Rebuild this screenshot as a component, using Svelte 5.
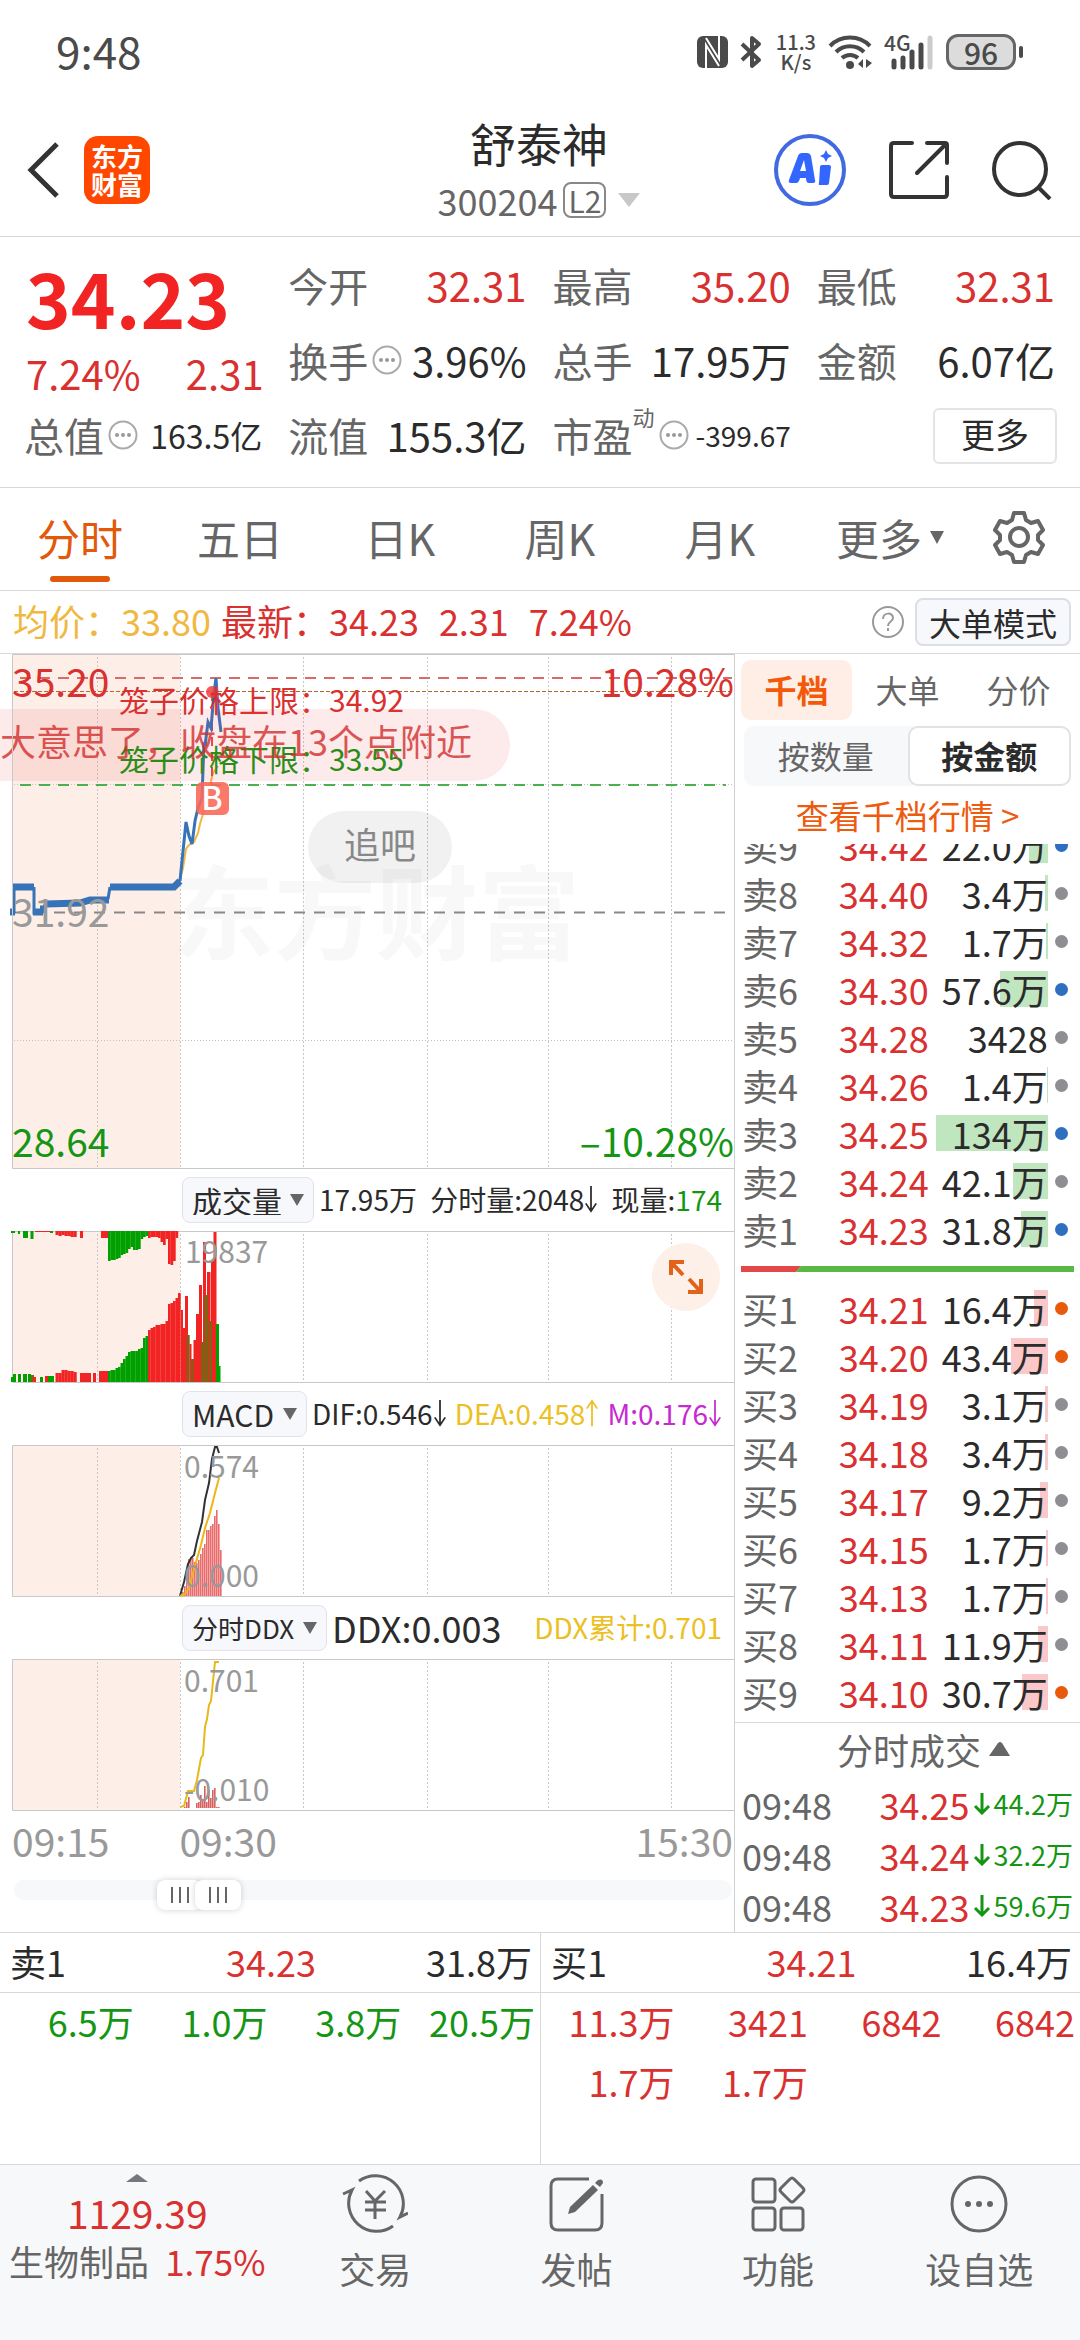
<script lang="ts">
	type Bar = [x: number, w: number, h: number, color: string];

	const RED = '#f22323';
	const GREEN = '#00a000';
	const BROWN = '#7d6414';
	const MAX_AMOUNT = 134;

	const periods = ['分时', '五日', '日K', '周K', '月K'];
	let period = $state('分时');

	const bookTabs = ['千档', '大单', '分价'];
	let bookTab = $state('千档');

	const units = ['按数量', '按金额'];
	let unit = $state('按金额');

	let rangeStart = $state(213);
	let rangeEnd = $state(269);

	const asks = [
		{ name: '卖9', price: '34.42', text: '22.0万', amount: 22, dot: 'blue' },
		{ name: '卖8', price: '34.40', text: '3.4万', amount: 3.4, dot: 'gray' },
		{ name: '卖7', price: '34.32', text: '1.7万', amount: 1.7, dot: 'gray' },
		{ name: '卖6', price: '34.30', text: '57.6万', amount: 57.6, dot: 'blue' },
		{ name: '卖5', price: '34.28', text: '3428', amount: 0, dot: 'gray' },
		{ name: '卖4', price: '34.26', text: '1.4万', amount: 1.4, dot: 'gray' },
		{ name: '卖3', price: '34.25', text: '134万', amount: 134, dot: 'blue' },
		{ name: '卖2', price: '34.24', text: '42.1万', amount: 42.1, dot: 'gray' },
		{ name: '卖1', price: '34.23', text: '31.8万', amount: 31.8, dot: 'blue' }
	];
	const bids = [
		{ name: '买1', price: '34.21', text: '16.4万', amount: 16.4, dot: 'orange' },
		{ name: '买2', price: '34.20', text: '43.4万', amount: 43.4, dot: 'orange' },
		{ name: '买3', price: '34.19', text: '3.1万', amount: 3.1, dot: 'gray' },
		{ name: '买4', price: '34.18', text: '3.4万', amount: 3.4, dot: 'gray' },
		{ name: '买5', price: '34.17', text: '9.2万', amount: 9.2, dot: 'gray' },
		{ name: '买6', price: '34.15', text: '1.7万', amount: 1.7, dot: 'gray' },
		{ name: '买7', price: '34.13', text: '1.7万', amount: 1.7, dot: 'gray' },
		{ name: '买8', price: '34.11', text: '11.9万', amount: 11.9, dot: 'gray' },
		{ name: '买9', price: '34.10', text: '30.7万', amount: 30.7, dot: 'orange' }
	];
	const trades = [
		{ time: '09:48', price: '34.25', text: '44.2万' },
		{ time: '09:48', price: '34.24', text: '32.2万' },
		{ time: '09:48', price: '34.23', text: '59.6万' }
	];
	const queues = [
		{ name: '卖1', price: '34.23', total: '31.8万', side: 'down', orders: ['6.5万', '1.0万', '3.8万', '20.5万'] },
		{ name: '买1', price: '34.21', total: '16.4万', side: 'up', orders: ['11.3万', '3421', '6842', '6842', '1.7万', '1.7万'] }
	];

	const gridX = [97, 180, 303, 427, 548, 671];

	// evenly spaced run of bars
	const run = (x: number, step: number, color: string, heights: number[]): Bar[] =>
		heights.map((h, i) => [x + i * step, step + 0.2, h, color]);

	const volume: Bar[] = [
		[11, 3, 5, GREEN], [13, 3, 8, GREEN], [18, 3, 8, GREEN], [23, 4, 8, GREEN], [28, 3, 8, GREEN],
		[31, 3, 7, BROWN], [33, 3, 5, RED], [40, 3, 5, GREEN], [45, 3, 6, RED], [48, 6, 6, GREEN],
		...run(55.5, 3, RED, [9, 9, 12, 12, 11, 11, 10]),
		[80, 11, 9, RED], [93, 3, 9, RED], [99, 9, 11, RED],
		...run(108, 2.5, GREEN, [11, 12, 12, 14, 15, 19, 23, 26, 30, 31, 31, 31, 33, 34, 44, 46]),
		...run(148, 2.5, RED, [52, 54, 55, 57, 57, 58, 58, 61, 78, 79, 81, 84, 89]),
		[181, 2, 72, RED], [183, 2, 54, RED], [185, 3, 86, RED], [186.7, 3, 47, BROWN],
		[189.5, 2, 38, RED], [191, 3, 23, BROWN], [193.5, 3, 42, RED], [196, 3, 68, RED],
		[199, 3, 97, RED], [203, 3, 140, RED], [207, 3.5, 110, RED], [201, 3, 40, BROWN],
		[204.5, 3.5, 87, BROWN], [211, 3, 121, RED], [209, 3, 61, BROWN], [213.5, 3, 150, RED],
		[216, 3, 58, GREEN], [218.5, 2, 16, GREEN]
	];
	const unmatched: Bar[] = [
		[11, 4, 2, GREEN], [18, 2, 3, GREEN], [23, 5, 7, GREEN], [30.5, 3, 8, GREEN], [35, 15, 1, RED],
		[50, 3, 2, GREEN],
		...run(55.5, 3, RED, [4, 5, 4, 5, 5, 6, 6]),
		[80, 3, 7, RED], [101, 7, 7, RED],
		...run(108, 2.5, GREEN, [30, 29, 29, 28, 27, 24, 23, 22, 18, 16, 19, 19, 18, 8, 6, 5]),
		...run(148, 2.5, RED, [7, 6, 6, 6, 7, 11, 14, 8, 33, 34, 30, 7])
	];
	const macd = run(182, 2, '#e96b6b', [4, 10, 20, 37, 39, 38, 34, 33, 36, 42, 48, 52, 66, 66, 70, 72, 80, 86, 72, 46]);
	const ddx = run(182, 2, '#d96060', [0, 1, 6, 11, 0, 0, 0, 5, 6, 13, 9, 22, 6, 18, 10, 18, 20, 1, 1]);
</script>

{#snippet more()}
	<svg class="more" viewBox="0 0 30 30" aria-hidden="true">
		<circle cx="15" cy="15" r="13.5" fill="none" stroke="#aaa" stroke-width="2" />
		<circle cx="9" cy="15" r="2" fill="#999" />
		<circle cx="15" cy="15" r="2" fill="#999" />
		<circle cx="21" cy="15" r="2" fill="#999" />
	</svg>
{/snippet}

{#snippet arrow(up: boolean)}
	<svg class="arrow" viewBox="0 0 16 32" fill="none" stroke="currentColor" stroke-width="2">
		<path d={up ? 'M8 31V2M2 11l6-9 6 9' : 'M8 1v29M2 21l6 9 6-9'} />
	</svg>
{/snippet}

{#snippet backdrop(height: number)}
	<rect x="13" y="0" width="167" {height} fill="#fdeee7" />
	<path
		d={gridX.map((x) => `M${x}.5 3V${height}`).join('')}
		stroke="#c8c8c8"
		stroke-width="1"
		stroke-dasharray="2 2"
	/>
{/snippet}

{#snippet frame(height: number)}
	<path d="M734 {height - 0.5}H12.5V0.5H734" fill="none" stroke="#c8c8c8" />
{/snippet}

{#snippet picker(label: string, title: string)}
	<span class="picker" class:small={label.length > 4}>
		<select aria-label={title}><option>{label}</option></select>
		<svg viewBox="0 0 14 12" aria-hidden="true"><path d="M0 0h14L7 12z" fill="#666" /></svg>
	</span>
{/snippet}

{#snippet book(rows: typeof asks, side: string)}
	<table class="book {side}">
		<tbody>
			{#each rows as row (row.name)}
				<tr>
					<th scope="row">{row.name}</th>
					<td class="price">{row.price}</td>
					<td class="amount">
						<i style="width: {(row.amount / MAX_AMOUNT) * 100}%"></i>
						<span>{row.text}</span>
					</td>
					<td class="mark"><b class={row.dot}></b></td>
				</tr>
			{/each}
		</tbody>
	</table>
{/snippet}

<div class="page">
	<div class="status">
		<span class="clock">9:48</span>
		<div class="signals">
			<svg width="31" height="32" viewBox="0 0 31 32">
				<rect width="31" height="32" rx="6" fill="#4a4a4a" />
				<path d="M9 32V9l13 21M9 2l13 21V0" fill="none" stroke="#fff" stroke-width="2" />
			</svg>
			<svg width="24" height="34" viewBox="0 0 24 34" fill="none" stroke="#4a4a4a" stroke-width="4">
				<path d="M2 9l17 16-7 6V3l7 6L2 25" stroke-linejoin="round" />
			</svg>
			<span class="speed">11.3<br />K/s</span>
			<svg width="44" height="36" viewBox="0 0 44 36" fill="none" stroke="#4a4a4a" stroke-width="4">
				<path d="M2 12a28 28 0 0 1 40 0M8 18a20 20 0 0 1 28 0M14 24a12 12 0 0 1 16 0" />
				<circle cx="22" cy="31" r="4" fill="#4a4a4a" stroke="none" />
				<path d="M30 30l5-5v9zM44 29l-6-4v9z" fill="#4a4a4a" stroke="none" />
			</svg>
			<svg width="50" height="36" viewBox="0 0 50 36">
				<text x="0" y="17" font-size="21" font-weight="500" fill="#4a4a4a">4G</text>
				<path d="M10 27v6M19 24v9M28 18v15M37 11v22" stroke="#4a4a4a" stroke-width="5" stroke-linecap="round" />
				<path d="M46 4v29" stroke="#ccc" stroke-width="5" stroke-linecap="round" />
			</svg>
			<span class="battery">96</span>
		</div>
	</div>

	<header>
		<div class="side">
			<button aria-label="返回">
				<svg width="34" height="58" viewBox="0 0 34 58" fill="none" stroke="#333" stroke-width="5">
					<path d="M31 3L5 29l26 26" />
				</svg>
			</button>
			<div class="logo">东方<br />财富</div>
		</div>
		<div class="title">
			<h1>舒泰神</h1>
			<button class="code">
				300204<span class="level">L2</span>
				<svg width="22" height="14" viewBox="0 0 22 14"><path d="M0 0h22L11 14z" fill="#c8c8c8" /></svg>
			</button>
		</div>
		<div class="side actions">
			<button aria-label="Ai">
				<svg width="72" height="72" viewBox="0 0 72 72" fill="#3366ff">
					<circle cx="36" cy="36" r="34" fill="#fff" stroke="#4169e1" stroke-width="4" />
					<path
						d="M24 22q1-3 4-3h5q3 0 4 3l4 24q1 3-2 3h-4q-3 0-3-5h-6q-1 5-4 5h-5q-3 0-2-3zM30 26l-4 11h6z"
						fill-rule="evenodd"
					/>
					<path d="M48 31h7q2 0 2 2l-2 16q0 2-2 2h-7q-2 0-1-2l1-16q0-2 2-2z" />
					<path d="M52 16l2 4 4 2-4 2-2 4-2-4-4-2 4-2z" />
				</svg>
			</button>
			<button aria-label="分享">
				<svg
					width="62" height="60" viewBox="0 0 62 60" fill="none" stroke="#333" stroke-width="4" stroke-linecap="round"
				>
					<path d="M24 3H6q-3 0-3 3v48q0 3 3 3h50q3 0 3-3V37M39 3h18q2 0 2 2v18M58 4L29 33" />
				</svg>
			</button>
			<button aria-label="搜索">
				<svg width="60" height="60" viewBox="0 0 60 60" fill="none" stroke="#333" stroke-width="4">
					<circle cx="28" cy="29" r="26" />
					<path d="M46 47l12 12" />
				</svg>
			</button>
		</div>
	</header>

	<section class="quote">
		<div class="last">
			<strong>34.23</strong>
			<div><span>7.24%</span><span>2.31</span></div>
		</div>
		<dl>
			<div class="c2"><dt>今开</dt><dd class="up">32.31</dd></div>
			<div><dt>最高</dt><dd class="up">35.20</dd></div>
			<div><dt>最低</dt><dd class="up">32.31</dd></div>
			<div class="c2"><dt>换手{@render more()}</dt><dd>3.96%</dd></div>
			<div><dt>总手</dt><dd>17.95万</dd></div>
			<div><dt>金额</dt><dd>6.07亿</dd></div>
			<div class="c1"><dt>总值{@render more()}</dt><dd class="mid">163.5亿</dd></div>
			<div><dt>流值</dt><dd>155.3亿</dd></div>
			<div><dt>市盈<sup>动</sup>{@render more()}</dt><dd class="tiny">-399.67</dd></div>
		</dl>
		<button class="expand">更多</button>
	</section>

	<nav class="periods">
		{#each periods as name (name)}
			<button class:active={period === name} onclick={() => (period = name)}>{name}</button>
		{/each}
		<button>更多<svg width="14" height="13" viewBox="0 0 14 13"><path d="M0 0h14L7 13z" fill="#666" /></svg></button>
		<button aria-label="设置">
			<svg width="54" height="54" viewBox="0 0 54 54" fill="none" stroke="#666" stroke-width="4" stroke-linejoin="round">
				<path d="M22 3h10l2 7 5 3 7-2 5 9-5 5v5l5 5-5 9-7-2-5 3-2 7H22l-2-7-5-3-7 2-5-9 5-5v-5l-5-5 5-9 7 2 5-3z" />
				<circle cx="27" cy="27" r="9" />
			</svg>
		</button>
	</nav>

	<div class="info">
		<span class="avg">均价：33.80</span>
		<span class="up">最新：34.23</span>
		<span class="up">2.31</span>
		<span class="up">7.24%</span>
		<svg class="help" width="34" height="34" viewBox="0 0 34 34" fill="none" stroke="#999" stroke-width="2">
			<circle cx="17" cy="17" r="15" />
			<path d="M12 14c0-7 10-7 10-1 0 4-5 3-5 8M17 23v3" />
		</svg>
		<button class="mode">大单模式</button>
	</div>

	<main>
		<div class="charts">
			<svg viewBox="0 0 734 515" role="img" aria-label="分时走势">
				{@render backdrop(515)}
				<text x="172" y="298" font-size="102" font-weight="700" fill="#000" opacity="0.025">东方财富</text>
				<path d="M14 130.5H732M14 386.5H732" stroke="#c0c0c0" stroke-dasharray="1 2" />
				<path d="M20 24H732" stroke="#d96a6a" stroke-width="2" stroke-dasharray="11 8" />
				<path d="M14 37.5H732" stroke="#b06a30" stroke-width="1" stroke-dasharray="4 2" />
				<path d="M20 131H726" stroke="#4caf50" stroke-width="2" stroke-dasharray="11 8" />
				<path d="M14 258.5H732" stroke="#888" stroke-width="2" stroke-dasharray="11 9" />
				<rect x="308" y="157" width="144" height="72" rx="36" fill="#000" opacity="0.055" />
				<text x="344" y="205" font-size="36" fill="#888">追吧</text>
				<path
					d="M180 225l3-11 3-19 3-4 5-3 4-9 2-9 3-10 4-23 4-10 2-8 5-7"
					fill="none" stroke="#f0b840" stroke-width="2"
				/>
				<path d="M212 38v92" stroke="#e84a4a" stroke-width="2" stroke-dasharray="9 6" />
				<path d="M12 258h2v-25M34 233v26h6l5-8M108 245l2-12" fill="none" stroke="#3673b8" stroke-width="3" />
				<path
					d="M12 233H34M10 258h5M33 258h10M40 255h6M46 250l34-1 10-3h19M110 233h64l6-6"
					fill="none" stroke="#3673b8" stroke-width="7"
				/>
				<path
					d="M180 227l2-20 4-39 3 14 3 8 3-23 3-13 4-10 2-56 1 4 3-24 3 6 3-35 2-15 2 30 3 24"
					fill="none" stroke="#3673b8" stroke-width="3"
				/>
				<circle cx="212" cy="38" r="6" fill="#f04040" opacity="0.85" />
				<g font-size="39">
					<text x="12" y="43" fill="#d93030">35.20</text>
					<text x="734" y="43" text-anchor="end" fill="#d93030">10.28%</text>
					<text x="12" y="273" fill="#999">31.92</text>
					<text x="12" y="503" fill="#149614">28.64</text>
					<text x="734" y="503" text-anchor="end" fill="#149614">–10.28%</text>
				</g>
				<text x="119" y="58" font-size="30" fill="#d93030">笼子价格上限：34.92</text>
				<text x="119" y="117" font-size="30" fill="#149614">笼子价格下限：33.55</text>
				<path d="M0 55H474a36 36 0 0 1 0 72H0z" fill="#f04a4a" opacity="0.11" />
				<text x="0" y="102" font-size="36" fill="#d32f2f" opacity="0.8">大意思了，收盘在13个点附近</text>
				<rect x="196" y="128" width="33" height="33" rx="6" fill="#f96a5b" opacity="0.9" />
				<text x="212" y="156" font-size="32" font-weight="500" text-anchor="middle" fill="#fff">B</text>
				{@render frame(515)}
			</svg>

			<div class="legend">
				{@render picker('成交量', '指标一')}
				<div class="values">
					<span>17.95万</span>
					<span>分时量:2048{@render arrow(false)}</span>
					<span>现量:<span class="down">174</span></span>
				</div>
			</div>
			<div class="pane">
				<svg viewBox="0 0 734 152" role="img" aria-label="成交量">
					{@render backdrop(152)}
					{@render frame(152)}
					{#each volume as [x, w, h, color]}
						<rect {x} y={151 - h} width={w} height={h} fill={color} />
					{/each}
					{#each unmatched as [x, w, h, color]}
						<rect {x} y="0" width={w} height={h} fill={color} />
					{/each}
					<text x="185" y="32" font-size="30" fill="#999">19837</text>
				</svg>
				<button class="zoom" aria-label="全屏">
					<svg width="36" height="36" viewBox="0 0 36 36" fill="none" stroke="#e2621b" stroke-width="4">
						<path d="M3 16V3h13M3 3l12 13M33 20v13H20M33 33L21 20" />
					</svg>
				</button>
			</div>

			<div class="legend">
				{@render picker('MACD', '指标二')}
				<div class="values">
					<span>DIF:0.546{@render arrow(false)}</span>
					<span class="dea">DEA:0.458{@render arrow(true)}</span>
					<span class="m">M:0.176{@render arrow(false)}</span>
				</div>
			</div>
			<svg viewBox="0 0 734 152" role="img" aria-label="MACD">
				{@render backdrop(152)}
				{@render frame(152)}
				{#each macd as [x, , h, color]}
					<rect {x} y={151 - h} width="1.6" height={h} fill={color} />
				{/each}
				<path d="M180 151l4-14 4-18 3-6 3-3 3-14 5-19 3-22 4-17 3-24 3-12h2l2 6" fill="none" stroke="#333" stroke-width="2" />
				<path d="M180 151l5-2 4-6 5-19 7-24 4-17 5-15 5-20 4-15" fill="none" stroke="#f0b414" stroke-width="2" />
				<text x="184" y="33" font-size="30" fill="#999">0.574</text>
				<text x="184" y="142" font-size="30" fill="#999">0.000</text>
			</svg>

			<div class="legend">
				{@render picker('分时DDX', '指标三')}
				<div class="values">
					<span class="big">DDX:0.003</span>
					<span class="dea">DDX累计:0.701</span>
				</div>
			</div>
			<svg viewBox="0 0 734 152" role="img" aria-label="DDX">
				{@render backdrop(152)}
				{@render frame(152)}
				{#each ddx as [x, , h, color]}
					<rect {x} y={149 - h} width="1.6" height={h} fill={color} />
				{/each}
				<path d="M180 148l4-1 4-15h6l3-11 4-22 2-3 2-28 2-8 2-14 2-4 4-39h4" fill="none" stroke="#e6b91e" stroke-width="2" />
				<text x="184" y="33" font-size="30" fill="#999">0.701</text>
				<text x="184" y="142" font-size="30" fill="#999">-0.010</text>
			</svg>

			<div class="axis"><span>09:15</span><span>09:30</span><span>15:30</span></div>
			<div class="range">
				<input type="range" min="0" max="1000" bind:value={rangeStart} aria-label="开始时间" />
				<input type="range" min="0" max="1000" bind:value={rangeEnd} aria-label="结束时间" />
			</div>
		</div>

		<aside>
			<div class="book-tabs">
				{#each bookTabs as name (name)}
					<button class:active={bookTab === name} onclick={() => (bookTab = name)}>{name}</button>
				{/each}
			</div>
			<div class="units">
				{#each units as name (name)}
					<button class:active={unit === name} onclick={() => (unit = name)}>{name}</button>
				{/each}
			</div>
			<a class="all" href="#book">查看千档行情 &gt;</a>
			<div class="asks">{@render book(asks, 'ask')}</div>
			<svg class="ratio" viewBox="0 0 333 6" preserveAspectRatio="none" aria-hidden="true">
				<path d="M0 0H60L55 6H0z" fill="#e24848" />
				<path d="M60 0H333V6H55z" fill="#5ab845" />
			</svg>
			{@render book(bids, 'bid')}
			<button class="ticks-title">
				分时成交<svg width="21" height="14" viewBox="0 0 21 14"><path d="M0 14L9 1q2-2 4 0l8 13z" fill="#666" /></svg>
			</button>
			<table class="ticks">
				<tbody>
					{#each trades as trade}
						<tr>
							<td>{trade.time}</td>
							<td class="up">{trade.price}</td>
							<td class="down">
								<svg width="18" height="22" viewBox="0 0 18 22" fill="none" stroke="currentColor" stroke-width="3">
									<path d="M9 0v20M2 13l7 7 7-7" />
								</svg>{trade.text}
							</td>
						</tr>
					{/each}
				</tbody>
			</table>
		</aside>
	</main>

	<section class="queues">
		{#each queues as queue (queue.name)}
			<div class="queue">
				<div class="queue-head">
					<span>{queue.name}</span>
					<span class="up">{queue.price}</span>
					<span>{queue.total}</span>
				</div>
				<ul class={queue.side}>
					{#each queue.orders as order}
						<li>{order}</li>
					{/each}
				</ul>
			</div>
		{/each}
	</section>

	<nav class="bottom">
		<a class="index" href="#index">
			<svg width="22" height="8" viewBox="0 0 22 8"><path d="M0 8L11 0l11 8z" fill="#76767c" /></svg>
			<span class="up points">1129.39</span>
			<span class="sector">生物制品<span class="up">1.75%</span></span>
		</a>
		<a href="#trade">
			<svg viewBox="0 0 66 60" fill="none" stroke="#666" stroke-width="3">
				<path d="M17 7a28 28 0 0 1 41 36l8-4M51 52A28 28 0 0 1 10 16l-9 4" />
				<path d="M24 17l9 10 10-10M33 27v18M23 28h21M23 36h21" />
			</svg>
			交易
		</a>
		<a href="#post">
			<svg viewBox="0 0 66 60" fill="none" stroke="#666" stroke-width="3">
				<path d="M45 5H14q-7 0-7 7v37q0 7 7 7h37q7 0 7-7V20" />
				<path d="M49 11l5 5-23 22-7 2 2-7z" fill="#666" stroke="none" />
				<path d="M51 9l3-3q5-2 5 3l-3 4z" fill="#666" stroke="none" />
			</svg>
			发帖
		</a>
		<a href="#tools">
			<svg viewBox="0 0 66 60" fill="none" stroke="#666" stroke-width="3">
				<rect x="8" y="5" width="22" height="23" rx="3" />
				<rect x="8" y="34" width="22" height="22" rx="3" />
				<rect x="36" y="34" width="22" height="22" rx="3" />
				<path d="M45 5q2-2 4 0l9 9q2 2 0 4l-9 9q-2 2-4 0l-9-9q-2-2 0-4z" />
			</svg>
			功能
		</a>
		<a href="#watch">
			<svg viewBox="0 0 66 60" fill="none" stroke="#666" stroke-width="3">
				<circle cx="33" cy="30" r="27" />
				<g fill="#666" stroke="none">
					<circle cx="22" cy="30" r="3" />
					<circle cx="33" cy="30" r="3" />
					<circle cx="44" cy="30" r="3" />
				</g>
			</svg>
			设自选
		</a>
	</nav>
</div>

<style>
	:global(body) {
		background: #fff;
	}

	.page {
		display: flex;
		flex-direction: column;
		min-height: 100vh;
		color: #2b2b2b;
		font-family: 'Noto Sans CJK SC', 'Noto Sans', sans-serif;
		font-size: 36px;
		line-height: 1;
		white-space: nowrap;
		overflow: hidden;
	}

	button,
	select {
		margin: 0;
		padding: 0;
		border: 0;
		background: none;
		color: inherit;
		font: inherit;
		cursor: pointer;
	}

	a {
		color: inherit;
		text-decoration: none;
	}

	svg {
		flex: none;
	}

	table {
		width: 100%;
		border-collapse: collapse;
	}

	.up {
		color: #d93030;
	}

	.down {
		color: #149614;
	}

	.status {
		display: flex;
		align-items: center;
		justify-content: space-between;
		height: 104px;
		padding: 0 64px 0 56px;
		color: #4a4a4a;
	}

	.clock {
		padding-bottom: 4px;
		font-size: 44px;
	}

	.signals {
		display: flex;
		align-items: center;
		gap: 12px;
	}

	.speed {
		font-size: 20px;
		font-weight: 500;
		line-height: 20px;
		text-align: center;
	}

	.battery {
		position: relative;
		width: 64px;
		border: 3px solid #666;
		border-radius: 12px;
		background: #dcdcdc;
		font-size: 30px;
		font-weight: 500;
		line-height: 30px;
		text-align: center;
	}

	.battery::after {
		content: '';
		position: absolute;
		top: 9px;
		right: -10px;
		width: 4px;
		height: 12px;
		border-radius: 2px;
		background: #4a4a4a;
	}

	header {
		display: grid;
		grid-template-columns: 1fr auto 1fr;
		align-items: center;
		height: 132px;
		padding: 0 28px 0 26px;
		border-bottom: 1px solid #d8d8d8;
	}

	.side {
		display: flex;
		align-items: center;
		gap: 24px;
	}

	.side svg {
		display: block;
	}

	.actions {
		justify-content: flex-end;
		gap: 42px;
	}

	.logo {
		padding: 6px 7px;
		border-radius: 14px;
		background: #ff4700;
		color: #fff;
		font-size: 26px;
		font-weight: 700;
		line-height: 28px;
	}

	.title {
		display: flex;
		flex-direction: column;
		align-items: center;
		gap: 14px;
		padding-bottom: 7px;
	}

	h1 {
		margin: 0;
		font-size: 46px;
		font-weight: 400;
		line-height: 52px;
	}

	.code {
		display: flex;
		align-items: center;
		gap: 6px;
		color: #666;
	}

	.code svg {
		margin-left: 6px;
	}

	.level {
		padding: 0 3px;
		border: 2px solid #888;
		border-radius: 8px;
		font-size: 30px;
		line-height: 32px;
	}

	.quote {
		position: relative;
		padding: 10px 25px 15px 24px;
		border-bottom: 1px solid #d8d8d8;
		font-size: 40px;
	}

	.last {
		position: absolute;
		top: 10px;
		left: 26px;
		display: flex;
		flex-direction: column;
		width: 22%;
		color: #f22323;
	}

	.last strong {
		font-size: 76px;
		font-weight: 700;
		line-height: 98px;
	}

	.last div {
		display: flex;
		justify-content: space-between;
		color: #d93030;
		line-height: 56px;
	}

	dl {
		display: grid;
		grid-template-columns: repeat(4, 1fr);
		column-gap: 26px;
		margin: 0;
	}

	dl div {
		display: flex;
		align-items: center;
		justify-content: space-between;
		height: 75px;
	}

	dl .c1 {
		grid-column: 1;
	}

	dl .c2 {
		grid-column: 2;
	}

	dt {
		display: flex;
		align-items: center;
		color: #666;
	}

	dd {
		margin: 0;
	}

	dd.mid {
		font-size: 32px;
	}

	dd.tiny {
		font-size: 28px;
	}

	sup {
		align-self: flex-start;
		margin-top: -10px;
		font-size: 22px;
		line-height: 22px;
	}

	.more {
		width: 30px;
		margin-left: 4px;
	}

	.expand {
		position: absolute;
		right: 23px;
		bottom: 23px;
		width: 124px;
		height: 56px;
		padding-bottom: 4px;
		border: 2px solid #e4e4e4;
		border-radius: 6px;
		font-size: 34px;
	}

	.periods {
		display: grid;
		grid-template-columns: repeat(5, 160fr) 180fr 78fr;
		height: 102px;
		padding-right: 22px;
		border-bottom: 1px solid #d8d8d8;
		color: #666;
		font-size: 43px;
	}

	.periods button {
		position: relative;
		display: flex;
		align-items: center;
		justify-content: center;
		gap: 8px;
		padding-bottom: 4px;
	}

	.periods .active {
		color: #e2590c;
	}

	.periods .active::after {
		content: '';
		position: absolute;
		bottom: 8px;
		width: 60px;
		height: 6px;
		border-radius: 3px;
		background: #e2590c;
	}

	.info {
		display: flex;
		align-items: center;
		gap: 20px;
		height: 62px;
		padding: 0 9px 0 13px;
		border-bottom: 1px solid #d8d8d8;
	}

	.info span {
		padding-bottom: 4px;
	}

	.avg {
		margin-right: -10px;
		color: #f0b840;
	}

	.help {
		margin-left: auto;
		margin-right: -10px;
	}

	.mode {
		padding: 0 12px;
		border: 2px solid #dcdee6;
		border-radius: 8px;
		background: #f7f8fb;
		font-size: 32px;
		line-height: 44px;
	}

	main {
		display: grid;
		grid-template-columns: minmax(0, 49fr) minmax(0, 23fr);
	}

	.charts {
		border-right: 1px solid #d0d0d0;
	}

	.charts > svg,
	.pane > svg {
		display: block;
		width: 100%;
	}

	.pane {
		position: relative;
	}

	.legend {
		display: flex;
		align-items: center;
		gap: 5px;
		height: 62px;
		padding: 0 12px 0 182px;
		font-size: 28px;
	}

	.values {
		display: flex;
		flex: 1;
		align-items: center;
		justify-content: space-between;
		padding-bottom: 3px;
	}

	.values > span,
	.picker {
		display: inline-flex;
		align-items: center;
	}

	.picker {
		gap: 8px;
		height: 44px;
		padding: 0 9px;
		border: 1px solid #e0e3ea;
		border-radius: 8px;
		background: #f7f8fb;
		font-size: 30px;
	}

	.picker.small {
		font-size: 26px;
	}

	.picker select {
		appearance: none;
	}

	.picker svg {
		width: 14px;
	}

	.arrow {
		width: 14px;
		height: 30px;
	}

	.big {
		font-size: 36px;
	}

	.dea {
		color: #ecbf24;
	}

	.m {
		color: #c62ad0;
	}

	.zoom {
		position: absolute;
		top: 12px;
		right: 14px;
		display: flex;
		align-items: center;
		justify-content: center;
		width: 68px;
		height: 68px;
		border-radius: 50%;
		background: #fdf0e8;
	}

	.axis {
		display: grid;
		grid-template-columns: 167fr 455fr auto;
		padding: 7px 1px 0 12px;
		color: #999;
		font-size: 39px;
		line-height: 44px;
	}

	.range {
		display: grid;
		align-items: center;
		height: 20px;
		margin: 18px 2px 0 14px;
		border-radius: 10px;
		background: #f7f8fa;
	}

	.range input {
		grid-area: 1 / 1;
		appearance: none;
		width: 100%;
		height: 30px;
		margin: 0;
		background: none;
		pointer-events: none;
	}

	.range input::-webkit-slider-thumb {
		appearance: none;
		width: 46px;
		height: 30px;
		border-radius: 8px;
		background:
			linear-gradient(#666, #666) 14px 50% / 2px 16px no-repeat,
			linear-gradient(#666, #666) 22px 50% / 2px 16px no-repeat,
			linear-gradient(#666, #666) 30px 50% / 2px 16px no-repeat,
			#fff;
		box-shadow: 0 0 6px rgba(0, 0, 0, 0.18);
		pointer-events: auto;
	}

	.book-tabs,
	.units {
		display: grid;
		grid-auto-flow: column;
		grid-auto-columns: 1fr;
		height: 60px;
		margin: 6px 6px 0;
		border-radius: 10px;
		color: #666;
		font-size: 32px;
	}

	.book-tabs button,
	.units button {
		padding-bottom: 2px;
		border-radius: 10px;
	}

	.book-tabs .active {
		background: #ffeee6;
		color: #f25a0a;
		font-weight: 700;
	}

	.units {
		margin: 6px 9px 0;
		background: #f7f8fa;
	}

	.units .active {
		border: 2px solid #e2e2e4;
		background: #fff;
		color: #2b2b2b;
		font-weight: 700;
	}

	.all {
		display: block;
		color: #ee5a0e;
		font-size: 33px;
		line-height: 58px;
		text-align: center;
	}

	.asks {
		display: flex;
		flex-direction: column;
		justify-content: flex-end;
		height: 411px;
		overflow: hidden;
	}

	.book tr {
		display: grid;
		grid-template-columns: 68fr 117fr 7fr 111fr 32fr;
		align-items: center;
		height: 48px;
		padding: 0 0 4px 7px;
		box-sizing: border-box;
	}

	th,
	td {
		padding: 0;
		font-weight: 400;
		text-align: left;
	}

	th {
		color: #666;
	}

	.book .price {
		color: #d93030;
		text-align: right;
	}

	.amount {
		position: relative;
		grid-column: 4;
		display: flex;
		justify-content: flex-end;
		line-height: 36px;
	}

	.amount i {
		position: absolute;
		top: 0;
		right: 0;
		height: 36px;
		background: #c0e6c0;
	}

	.bid .amount i {
		background: #fac8c8;
	}

	.amount span {
		position: relative;
	}

	.mark b {
		display: block;
		width: 13px;
		height: 13px;
		margin-left: 7px;
		border-radius: 50%;
		background: #8e8e93;
	}

	.mark .blue {
		background: #2f6fc0;
	}

	.mark .orange {
		background: #e8590c;
	}

	.ratio {
		display: block;
		width: calc(100% - 12px);
		height: 6px;
		margin: 11px 6px 14px;
	}

	.ticks-title {
		display: flex;
		align-items: center;
		justify-content: center;
		gap: 8px;
		width: 100%;
		height: 57px;
		margin-top: 4px;
		padding: 0 0 4px 32px;
		border-top: 1px solid #d8d8d8;
		color: #666;
	}

	.ticks tr {
		display: grid;
		grid-template-columns: 1fr auto auto;
		align-items: center;
		height: 51px;
		padding: 0 7px 2px;
		box-sizing: border-box;
		color: #666;
	}

	.ticks td:last-child {
		display: flex;
		align-items: center;
		gap: 3px;
		margin-left: 3px;
		font-size: 27px;
	}

	.queues {
		display: grid;
		grid-template-columns: 1fr 1fr;
		flex: 1;
		border-top: 1px solid #d8d8d8;
	}

	.queue + .queue {
		border-left: 1px solid #d8d8d8;
	}

	.queue-head {
		display: grid;
		grid-template-columns: 1fr auto 1fr;
		align-items: center;
		height: 59px;
		padding: 0 8px 0 10px;
		border-bottom: 1px solid #d8d8d8;
	}

	.queue-head span {
		padding-bottom: 4px;
	}

	.queue-head span:last-child {
		text-align: right;
	}

	ul {
		display: grid;
		grid-template-columns: repeat(4, 1fr);
		margin: 0;
		padding: 0 5px 0 0;
		list-style: none;
		text-align: right;
	}

	li {
		height: 60px;
		line-height: 56px;
	}

	.bottom {
		display: grid;
		grid-template-columns: 274fr repeat(4, 201fr);
		height: 175px;
		border-top: 1px solid #d8d8d8;
		background: #f7f8fa;
		color: #666;
	}

	.bottom a {
		display: flex;
		flex-direction: column;
		align-items: center;
		gap: 16px;
		padding-top: 9px;
	}

	.bottom a > svg {
		height: 60px;
	}

	.bottom .index {
		gap: 11px;
	}

	.bottom .index > svg {
		height: 8px;
	}

	.points {
		font-size: 39px;
	}

	.sector {
		display: flex;
		gap: 16px;
		font-size: 35px;
	}
</style>
